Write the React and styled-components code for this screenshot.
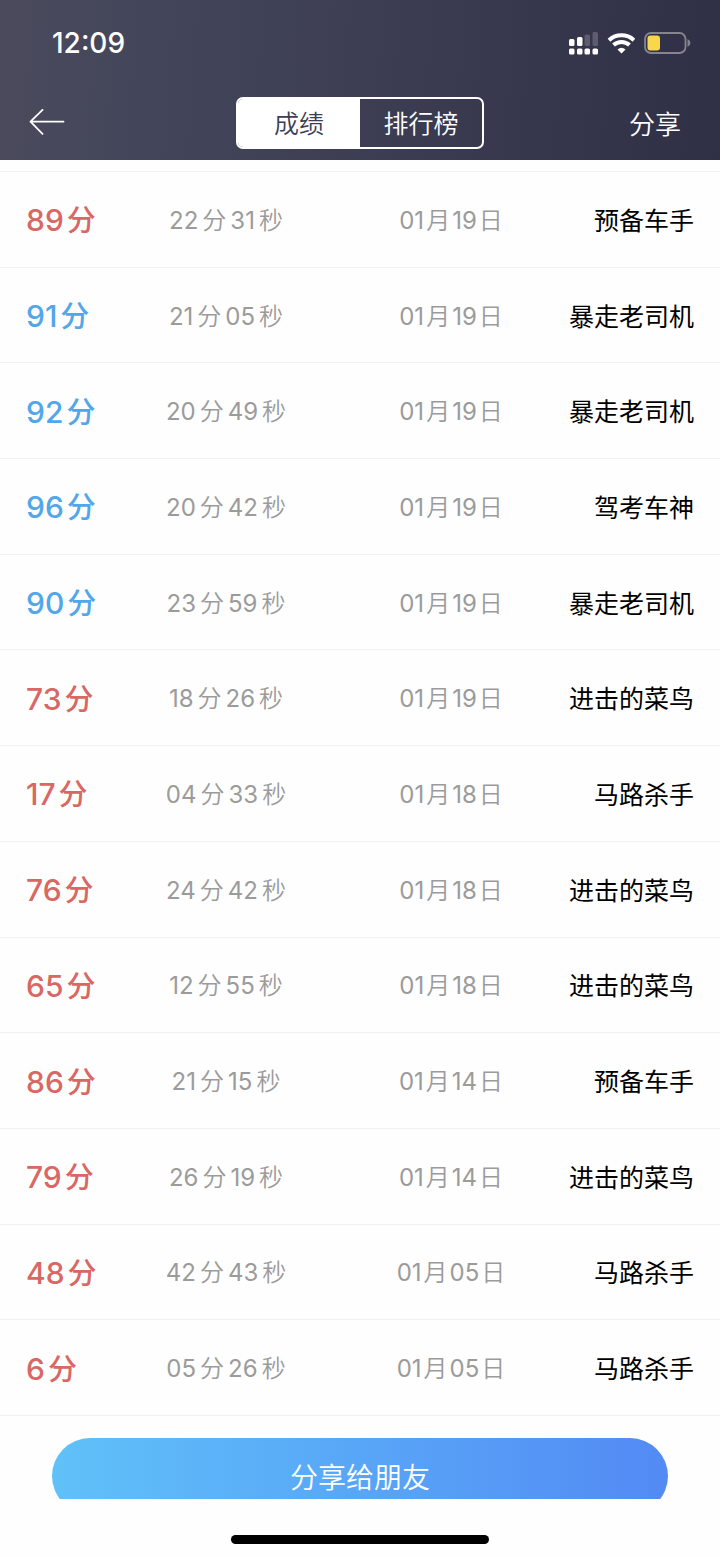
import React, { useState } from 'react';
import styled, { createGlobalStyle } from 'styled-components';

const Colors = {
  red: '#d96763',
  blue: '#53a6e9',
  grey: '#9b9b9b',
  line: '#f1f1f1',
  dark: '#3d3e53',
};

const GlobalStyle = createGlobalStyle`
  * {
    box-sizing: border-box;
  }

  body {
    margin: 0;
    background-color: #fefefe;
    font-family: Inter, "Noto Sans CJK SC", sans-serif;
  }

  button {
    padding: 0;
    border: 0;
    background: none;
    color: inherit;
    font: inherit;
    cursor: pointer;
  }
`;

const Page = styled.div`
  display: flex;
  flex-direction: column;
  min-height: 100vh;
`;

const Header = styled.header`
  color: #fff;
  background: linear-gradient(94deg, #4b4a5d 0%, #43465a 20%, #3d3e54 50%, #2f2f45 100%);
`;

const StatusBar = styled.div`
  display: flex;
  align-items: center;
  justify-content: space-between;
  height: 86px;
  padding: 0 29px 0 52px;

  time {
    font-size: 28px;
    font-weight: 500;
  }
`;

const StatusIcons = styled.div`
  display: flex;
  align-items: center;
  gap: 9px;

  svg {
    display: block;
  }
`;

const NavBar = styled.nav`
  display: grid;
  grid-template-columns: 1fr auto 1fr;
  align-items: center;
  height: 74px;
  padding: 0 39px 0 28px;
`;

const BackButton = styled.button`
  justify-self: start;

  svg {
    display: block;
  }
`;

const ShareButton = styled.button`
  justify-self: end;
  padding-bottom: 2px;
  font-size: 26px;
  font-weight: 350;
`;

const Tabs = styled.div`
  display: flex;
  height: 52px;
  margin-left: 11px;
  overflow: hidden;
  border: 2px solid #fff;
  border-radius: 7px;
`;

const Tab = styled.button`
  width: 122px;
  padding-bottom: 2px;
  font-size: 25px;
  font-weight: 350;
  color: ${({ $active }) => ($active ? Colors.dark : '#fff')};
  background-color: ${({ $active }) => ($active ? '#fff' : 'transparent')};
`;

const Main = styled.main`
  display: flex;
  flex: 1;
  flex-direction: column;
  padding-top: 11px;
`;

const ScoreTable = styled.table`
  display: flex;
  flex: 1;
  border-top: 1px solid ${Colors.line};

  tbody {
    display: flex;
    flex: 1;
    flex-direction: column;
  }
`;

const ScoreRow = styled.tr`
  display: grid;
  flex: 1;
  grid-template-columns: 90px 1fr 1fr 130px;
  align-items: center;
  min-height: 80px;
  padding: 3px 26px 0;
  border-bottom: 1px solid ${Colors.line};
`;

const Cell = styled.td`
  padding: 0;
  font-size: 25px;
  line-height: 36px;
  text-align: center;
  white-space: nowrap;
  color: ${Colors.grey};
`;

const ScoreCell = styled(Cell)`
  font-size: 30px;
  font-weight: 550;
  text-align: left;
  color: ${({ $passed }) => ($passed ? Colors.blue : Colors.red)};
`;

const PairCell = styled(Cell)`
  font-size: 24px;
`;

const RankCell = styled(Cell)`
  text-align: right;
  color: #000;
`;

const Unit = styled.span`
  margin: 0 ${({ $gap }) => $gap}px;
  font-size: 24px;
  font-weight: 350;
`;

const ScoreUnit = styled.span`
  margin-left: 3px;
  font-size: 29px;
  font-weight: 500;
`;

const ShareArea = styled.div`
  height: 83px;
  padding: 22px 52px 0;
  overflow: hidden;
`;

const ShareFriends = styled.button`
  display: block;
  width: 100%;
  height: 76px;
  border-radius: 38px;
  font-size: 28px;
  font-weight: 350;
  color: #fff;
  background: linear-gradient(90deg, #60c1f8, #58a6f7 50%, #538af4);
`;

const HomeArea = styled.footer`
  display: flex;
  justify-content: center;
  height: 59px;
  padding-top: 36px;

  span {
    width: 258px;
    height: 9px;
    border-radius: 5px;
    background-color: #000;
  }
`;

const records = [
  { score: 89, time: ['22', '31'], date: ['01', '19'], rank: '预备车手' },
  { score: 91, time: ['21', '05'], date: ['01', '19'], rank: '暴走老司机' },
  { score: 92, time: ['20', '49'], date: ['01', '19'], rank: '暴走老司机' },
  { score: 96, time: ['20', '42'], date: ['01', '19'], rank: '驾考车神' },
  { score: 90, time: ['23', '59'], date: ['01', '19'], rank: '暴走老司机' },
  { score: 73, time: ['18', '26'], date: ['01', '19'], rank: '进击的菜鸟' },
  { score: 17, time: ['04', '33'], date: ['01', '18'], rank: '马路杀手' },
  { score: 76, time: ['24', '42'], date: ['01', '18'], rank: '进击的菜鸟' },
  { score: 65, time: ['12', '55'], date: ['01', '18'], rank: '进击的菜鸟' },
  { score: 86, time: ['21', '15'], date: ['01', '14'], rank: '预备车手' },
  { score: 79, time: ['26', '19'], date: ['01', '14'], rank: '进击的菜鸟' },
  { score: 48, time: ['42', '43'], date: ['01', '05'], rank: '马路杀手' },
  { score: 6, time: ['05', '26'], date: ['01', '05'], rank: '马路杀手' },
];

const SignalIcon = () => (
  <svg width="30" height="24" viewBox="0 0 30 24" fill="#fff">
    <rect x="1" y="8" width="5.500" height="7" rx="1.500" />
    <rect x="9" y="6" width="5.500" height="9" rx="1.500" />
    <rect x="16.500" y="3.500" width="5.500" height="11.500" rx="1.500" opacity="0.2" />
    <rect x="24.500" y="1" width="5.500" height="14" rx="1.500" opacity="0.2" />
    <rect x="1" y="17.500" width="5.500" height="6" rx="1.500" />
    <rect x="9" y="17.500" width="5.500" height="6" rx="1.500" />
    <rect x="16.500" y="17.500" width="5.500" height="6" rx="1.500" />
    <rect x="24.500" y="17.500" width="5.500" height="6" rx="1.500" />
  </svg>
);

const WifiIcon = () => (
  <svg width="28" height="21" viewBox="0 0 28 21" fill="none" stroke="#fff" strokeWidth="4">
    <path d="M2 7.200C9 .7 20 .7 27 7.200" />
    <path d="M6.500 12C11 7.900 18 7.900 22.500 12" />
    <path d="M14.500 20.500L10.500 16.500Q14.500 13 18.500 16.500Z" fill="#fff" stroke="none" />
  </svg>
);

const BatteryIcon = () => (
  <svg width="47" height="22" viewBox="0 0 47 22">
    <rect x="1" y="1" width="40.500" height="20" rx="6" fill="none" stroke="#85858f" strokeWidth="1.800" />
    <path d="M43.500 7Q46.500 8.500 46.500 11Q46.500 13.500 43.500 15Z" fill="#85858f" />
    <rect x="3.500" y="3.500" width="12.500" height="15" rx="3" fill="#f8d74a" />
  </svg>
);

const BackIcon = () => (
  <svg width="38" height="28" viewBox="0 0 38 28" fill="none" stroke="#fff" strokeWidth="1.800" strokeLinecap="round" strokeLinejoin="round">
    <path d="M14.500 .9L2.500 12.700L14.500 24.900M2.500 12.700H35.500" />
  </svg>
);

const Pair = ({ values, units, gap }) => (
  <PairCell>
    {values[0]}
    <Unit $gap={gap}>{units[0]}</Unit>
    {values[1]}
    <Unit $gap={gap}>{units[1]}</Unit>
  </PairCell>
);

const App = () => {
  const [tab, setTab] = useState('成绩');

  return (
    <Page>
      <GlobalStyle />
      <Header>
        <StatusBar>
          <time>12:09</time>
          <StatusIcons>
            <SignalIcon />
            <WifiIcon />
            <BatteryIcon />
          </StatusIcons>
        </StatusBar>
        <NavBar>
          <BackButton type="button" aria-label="返回"><BackIcon /></BackButton>
          <Tabs>
            {
              ['成绩', '排行榜'].map(name => (
                <Tab type="button" key={name} $active={tab === name} onClick={() => setTab(name)}>{name}</Tab>
              ))
            }
          </Tabs>
          <ShareButton type="button">分享</ShareButton>
        </NavBar>
      </Header>
      <Main>
        <ScoreTable>
          <tbody>
            {
              records.map(({ score, time, date, rank }, idx) => (
                <ScoreRow key={idx}>
                  <ScoreCell $passed={score >= 90}>{score}<ScoreUnit>分</ScoreUnit></ScoreCell>
                  <Pair values={time} units={['分', '秒']} gap={4} />
                  <Pair values={date} units={['月', '日']} gap={2} />
                  <RankCell>{rank}</RankCell>
                </ScoreRow>
              ))
            }
          </tbody>
        </ScoreTable>
        <ShareArea>
          <ShareFriends type="button">分享给朋友</ShareFriends>
        </ShareArea>
      </Main>
      <HomeArea><span /></HomeArea>
    </Page>
  );
};

export default App;
